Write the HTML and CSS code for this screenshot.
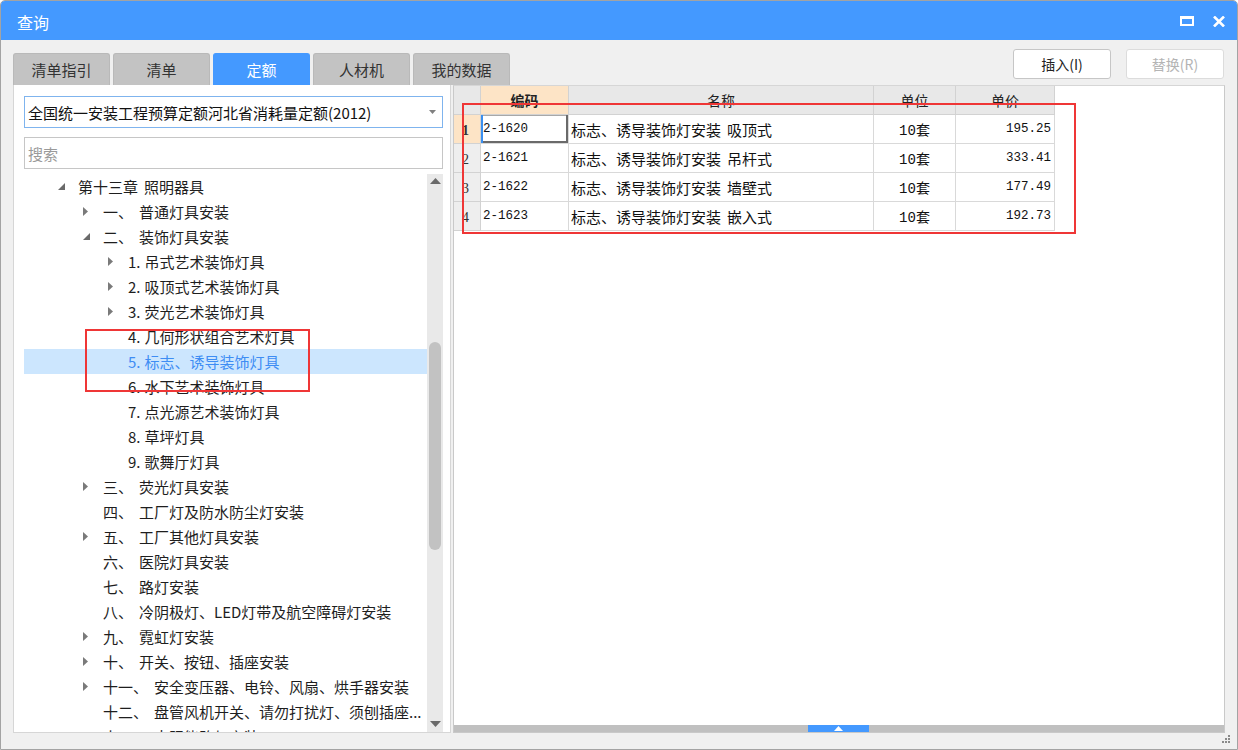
FILE: index.html
```html
<!DOCTYPE html>
<html lang="zh-CN">
<head>
<meta charset="utf-8">
<title>查询</title>
<link rel="stylesheet" href="styles.css">
</head>
<body>
<div class="window">
  <div class="titlebar">
    <span class="title">查询</span>
    <div class="win-ctrls">
      <svg class="ico-restore" width="14" height="10" viewBox="0 0 14 10"><rect x="1" y="1.5" width="12" height="7.5" fill="none" stroke="#fff" stroke-width="2"/><rect x="0" y="0" width="14" height="3" fill="#fff"/></svg>
      <svg class="ico-close" width="14" height="11" viewBox="0 0 14 11"><path d="M2 0.5L12 10.5M12 0.5L2 10.5" stroke="#fff" stroke-width="2.6"/></svg>
    </div>
  </div>

  <div class="body">
    <div class="toolbar">
      <div class="tabs">
        <div class="tab">清单指引</div>
        <div class="tab">清单</div>
        <div class="tab active">定额</div>
        <div class="tab">人材机</div>
        <div class="tab">我的数据</div>
      </div>
      <div class="buttons">
        <button class="btn">插入(I)</button>
        <button class="btn disabled">替换(R)</button>
      </div>
    </div>

    <div class="main">
      <div class="left">
        <div class="select">
          <span class="select-text">全国统一安装工程预算定额河北省消耗量定额(2012)</span>
          <svg class="select-arrow" width="7" height="4" viewBox="0 0 7 4"><path d="M0 0H7L3.5 4Z" fill="#808080"/></svg>
        </div>
        <div class="search">搜索</div>
        <div class="tree">
          <div class="tree-list">
            <div class="row l0"><span class="tw"><svg width="7" height="7" viewBox="0 0 7 7"><path d="M7 0V7H0Z" fill="#6a6a6a"/></svg></span>第十三章<span class="sp"></span>照明器具</div>
            <div class="row l1"><span class="tw"><svg width="6" height="9" viewBox="0 0 6 9"><path d="M0 0L5 4.5L0 9Z" fill="#7a7a7a"/></svg></span><span class="num">一、</span>普通灯具安装</div>
            <div class="row l1"><span class="tw"><svg width="7" height="7" viewBox="0 0 7 7"><path d="M7 0V7H0Z" fill="#6a6a6a"/></svg></span><span class="num">二、</span>装饰灯具安装</div>
            <div class="row l2"><span class="tw"><svg width="6" height="9" viewBox="0 0 6 9"><path d="M0 0L5 4.5L0 9Z" fill="#7a7a7a"/></svg></span><span class="dot">1.</span>吊式艺术装饰灯具</div>
            <div class="row l2"><span class="tw"><svg width="6" height="9" viewBox="0 0 6 9"><path d="M0 0L5 4.5L0 9Z" fill="#7a7a7a"/></svg></span><span class="dot">2.</span>吸顶式艺术装饰灯具</div>
            <div class="row l2"><span class="tw"><svg width="6" height="9" viewBox="0 0 6 9"><path d="M0 0L5 4.5L0 9Z" fill="#7a7a7a"/></svg></span><span class="dot">3.</span>荧光艺术装饰灯具</div>
            <div class="row l2"><span class="tw"></span><span class="dot">4.</span>几何形状组合艺术灯具</div>
            <div class="row l2 selected"><span class="tw"></span><span class="dot">5.</span>标志、诱导装饰灯具</div>
            <div class="row l2"><span class="tw"></span><span class="dot">6.</span>水下艺术装饰灯具</div>
            <div class="row l2"><span class="tw"></span><span class="dot">7.</span>点光源艺术装饰灯具</div>
            <div class="row l2"><span class="tw"></span><span class="dot">8.</span>草坪灯具</div>
            <div class="row l2"><span class="tw"></span><span class="dot">9.</span>歌舞厅灯具</div>
            <div class="row l1"><span class="tw"><svg width="6" height="9" viewBox="0 0 6 9"><path d="M0 0L5 4.5L0 9Z" fill="#7a7a7a"/></svg></span><span class="num">三、</span>荧光灯具安装</div>
            <div class="row l1"><span class="tw"></span><span class="num">四、</span>工厂灯及防水防尘灯安装</div>
            <div class="row l1"><span class="tw"><svg width="6" height="9" viewBox="0 0 6 9"><path d="M0 0L5 4.5L0 9Z" fill="#7a7a7a"/></svg></span><span class="num">五、</span>工厂其他灯具安装</div>
            <div class="row l1"><span class="tw"></span><span class="num">六、</span>医院灯具安装</div>
            <div class="row l1"><span class="tw"></span><span class="num">七、</span>路灯安装</div>
            <div class="row l1"><span class="tw"></span><span class="num">八、</span>冷阴极灯、LED灯带及航空障碍灯安装</div>
            <div class="row l1"><span class="tw"><svg width="6" height="9" viewBox="0 0 6 9"><path d="M0 0L5 4.5L0 9Z" fill="#7a7a7a"/></svg></span><span class="num">九、</span>霓虹灯安装</div>
            <div class="row l1"><span class="tw"><svg width="6" height="9" viewBox="0 0 6 9"><path d="M0 0L5 4.5L0 9Z" fill="#7a7a7a"/></svg></span><span class="num">十、</span>开关、按钮、插座安装</div>
            <div class="row l1"><span class="tw"><svg width="6" height="9" viewBox="0 0 6 9"><path d="M0 0L5 4.5L0 9Z" fill="#7a7a7a"/></svg></span><span class="num">十一、</span>安全变压器、电铃、风扇、烘手器安装</div>
            <div class="row l1"><span class="tw"></span><span class="num">十二、</span>盘管风机开关、请勿打扰灯、须刨插座...</div>
            <div class="row l1"><span class="tw"></span><span class="num">十三、</span>太阳能路灯安装</div>
          </div>
          <div class="vscroll">
            <svg class="sb-up" width="11" height="6" viewBox="0 0 11 6"><path d="M0 6L5.5 0L11 6Z" fill="#6a6a6a"/></svg>
            <div class="sb-thumb"></div>
            <div class="sb-fill"></div>
            <svg class="sb-down" width="11" height="6" viewBox="0 0 11 6"><path d="M0 0L5.5 6L11 0Z" fill="#6a6a6a"/></svg>
          </div>
        </div>
      </div>

      <div class="right">
        <div class="grid-area">
          <div class="grid">
            <div class="hc rh"></div>
            <div class="hc sel">编码</div>
            <div class="hc">名称</div>
            <div class="hc">单位</div>
            <div class="hc">单价</div>

            <div class="rn cur">1</div>
            <div class="c code focus">2-1620</div>
            <div class="c name">标志、诱导装饰灯安装<span class="sp"></span>吸顶式</div>
            <div class="c unit">10套</div>
            <div class="c price">195.25</div>

            <div class="rn">2</div>
            <div class="c code">2-1621</div>
            <div class="c name">标志、诱导装饰灯安装<span class="sp"></span>吊杆式</div>
            <div class="c unit">10套</div>
            <div class="c price">333.41</div>

            <div class="rn">3</div>
            <div class="c code">2-1622</div>
            <div class="c name">标志、诱导装饰灯安装<span class="sp"></span>墙壁式</div>
            <div class="c unit">10套</div>
            <div class="c price">177.49</div>

            <div class="rn">4</div>
            <div class="c code">2-1623</div>
            <div class="c name">标志、诱导装饰灯安装<span class="sp"></span>嵌入式</div>
            <div class="c unit">10套</div>
            <div class="c price">192.73</div>
          </div>
        </div>
        <div class="hscroll">
          <div class="hs-thumb"><svg width="9" height="5" viewBox="0 0 9 5"><path d="M0 5L4.5 0L9 5Z" fill="#fff"/></svg></div>
        </div>
      </div>
    </div>

    <div class="statusbar">
      <svg class="grip" width="9" height="9" viewBox="0 0 9 9">
        <rect x="6" y="0" width="2" height="2" fill="#8a8a8a"/>
        <rect x="3" y="3" width="2" height="2" fill="#8a8a8a"/>
        <rect x="6" y="3" width="2" height="2" fill="#8a8a8a"/>
        <rect x="0" y="6" width="2" height="2" fill="#8a8a8a"/>
        <rect x="3" y="6" width="2" height="2" fill="#8a8a8a"/>
        <rect x="6" y="6" width="2" height="2" fill="#8a8a8a"/>
      </svg>
    </div>
  </div>

  <div class="mark mark-tree"></div>
  <div class="mark mark-grid"></div>
</div>
</body>
</html>
```

FILE: styles.css
```css
* { box-sizing: border-box; }

html, body {
  margin: 0;
  padding: 0;
  width: 1238px;
  height: 750px;
  overflow: hidden;
  background: #ffffff;
  font-family: "Noto Sans CJK SC", "Noto Sans", sans-serif;
  color: #222;
}

.window {
  position: relative;
  width: 1238px;
  height: 750px;
  border: 1px solid #a3a3a3;
  border-radius: 5px 5px 0 0;
  background: #f0f0f0;
  display: flex;
  flex-direction: column;
  overflow: hidden;
}

/* title bar */
.titlebar {
  height: 39px;
  flex: 0 0 39px;
  background: #4499ff;
  display: flex;
  align-items: center;
  justify-content: space-between;
  padding: 0 11px 0 16px;
}
.title {
  color: #fff;
  font-size: 16px;
  line-height: 1;
  margin-top: 2px;
}
.win-ctrls {
  display: flex;
  align-items: center;
  gap: 18px;
  margin-top: 1px;
}
.win-ctrls svg { display: block; }

/* body */
.body {
  flex: 1;
  display: flex;
  flex-direction: column;
  padding: 0 12px 0 12px;
}

.toolbar {
  height: 45px;
  flex: 0 0 45px;
  display: flex;
  justify-content: space-between;
}
.tabs {
  display: flex;
  align-items: flex-end;
  gap: 3px;
}
.tab {
  width: 97px;
  height: 32px;
  background: #c3c3c3;
  border: 1px solid #b9b9b9;
  border-bottom: none;
  border-radius: 3px 3px 0 0;
  font-size: 15px;
  color: #333;
  display: flex;
  align-items: center;
  justify-content: center;
}
.tab.active {
  background: #4499ff;
  border-color: #4499ff;
  color: #fff;
}
.buttons {
  display: flex;
  gap: 15px;
  padding-top: 9px;
  padding-right: 1px;
}
.btn {
  width: 98px;
  height: 30px;
  background: #fff;
  border: 1px solid #c6c6c6;
  border-radius: 3px;
  font-family: "Noto Sans CJK SC", "Noto Sans", sans-serif;
  font-size: 14px;
  color: #222;
  padding: 0;
}
.btn.disabled {
  color: #b4b4b4;
  border-color: #dcdcdc;
}

/* main */
.main {
  flex: 0 0 648px;
  height: 648px;
  display: flex;
  gap: 2px;
}

.left {
  width: 438px;
  flex: 0 0 438px;
  background: #fff;
  border: 1px solid #d6d6d6;
  border-top: none;
  padding: 11px 7px 0 10px;
  display: flex;
  flex-direction: column;
}

.select {
  height: 32px;
  flex: 0 0 32px;
  border: 1px solid #7fb4ee;
  display: flex;
  align-items: center;
  justify-content: space-between;
  padding: 0 6px 0 3px;
}
.select-text {
  font-size: 15px;
  color: #111;
}
.select-arrow { display: block; }

.search {
  height: 32px;
  flex: 0 0 32px;
  margin-top: 9px;
  border: 1px solid #c6c6c6;
  font-size: 15px;
  color: #9a9a9a;
  display: flex;
  align-items: center;
  padding-left: 3px;
}

.tree {
  margin-top: 5px;
  flex: 1;
  display: flex;
  overflow: hidden;
  min-height: 0;
}
.tree-list {
  flex: 1;
  overflow: hidden;
}
.row {
  height: 25px;
  display: flex;
  align-items: center;
  font-size: 15px;
  color: #1e1e1e;
  white-space: nowrap;
}
.row.l0 { padding-left: 31px; }
.row.l1 { padding-left: 56px; }
.row.l2 { padding-left: 81px; }
.row.selected {
  background: #cce6fe;
  color: #3e8df4;
}
.tw {
  width: 23px;
  flex: 0 0 23px;
  display: flex;
  align-items: center;
  padding-left: 3px;
}
.tw svg { display: block; }
.num { margin-right: 6px; }
.dot { margin-right: 4px; }
.sp {
  display: inline-block;
  width: 6px;
}

.vscroll {
  width: 16px;
  flex: 0 0 16px;
  background: #e9e9e9;
  display: flex;
  flex-direction: column;
  align-items: center;
}
.sb-up { margin-top: 4px; display: block; }
.sb-thumb {
  margin-top: 158px;
  width: 12px;
  height: 208px;
  border-radius: 6px;
  background: #c2c2c2;
}
.sb-fill { flex: 1; }
.sb-down { margin-bottom: 5px; display: block; }

/* right grid panel */
.right {
  flex: 1;
  background: #fff;
  border: 1px solid #c9c9c9;
  border-top: 1px solid #d6d6d6;
  display: flex;
  flex-direction: column;
}
.grid-area {
  flex: 1;
  overflow: hidden;
}
.grid {
  display: grid;
  grid-template-columns: 27px 88px 305px 82px 99px;
  grid-auto-rows: 29px;
  width: 601px;
}
.hc {
  background: #e8e8e8;
  border-right: 1px solid #d2d2d2;
  border-bottom: 1px solid #d2d2d2;
  font-size: 14px;
  color: #222;
  display: flex;
  align-items: center;
  justify-content: center;
}
.hc.sel {
  background: #fde4c6;
  font-weight: bold;
}
.rn {
  background: #eeeeee;
  border-right: 1px solid #d2d2d2;
  border-bottom: 1px solid #d2d2d2;
  font-family: "Liberation Serif", serif;
  font-size: 14px;
  color: #333;
  display: flex;
  align-items: center;
  padding-left: 8px;
  padding-top: 3px;
}
.rn.cur {
  background: #fde4c6;
  font-weight: bold;
}
.c {
  border-right: 1px solid #d9d9d9;
  border-bottom: 1px solid #d9d9d9;
  display: flex;
  align-items: center;
  white-space: nowrap;
  color: #111;
}
.c.code {
  font-family: "Liberation Mono", monospace;
  font-size: 12.5px;
  padding-left: 2px;
}
.c.focus {
  box-shadow: inset 2px 0 0 #3a8ff0, inset -2px -2px 0 #6a6a6a, inset 0 1px 0 #a8a8a8;
}
.c.name {
  font-size: 15px;
  padding-left: 2px;
}
.c.unit {
  font-family: "Liberation Mono", "Noto Sans CJK SC", monospace;
  font-size: 14px;
  justify-content: center;
}
.c.price {
  font-family: "Liberation Mono", monospace;
  font-size: 12.5px;
  justify-content: flex-end;
  padding-right: 3px;
}

.hscroll {
  height: 7px;
  flex: 0 0 7px;
  background: #c0c0c0;
  position: relative;
}
.hs-thumb {
  position: absolute;
  left: 354px;
  top: 0;
  width: 61px;
  height: 7px;
  background: #4499ff;
  display: flex;
  align-items: center;
  justify-content: center;
}
.hs-thumb svg { display: block; }

.statusbar {
  flex: 1;
  display: flex;
  justify-content: flex-end;
  align-items: flex-end;
  padding: 0 0 5px 0;
  margin-right: -6px;
}
.grip { display: block; }

/* annotation marks */
.mark {
  position: absolute;
  border: 2px solid #ef3636;
  pointer-events: none;
}
.mark-tree {
  left: 84px;
  top: 328px;
  width: 225px;
  height: 63px;
}
.mark-grid {
  left: 461px;
  top: 102px;
  width: 614px;
  height: 131px;
}
```
